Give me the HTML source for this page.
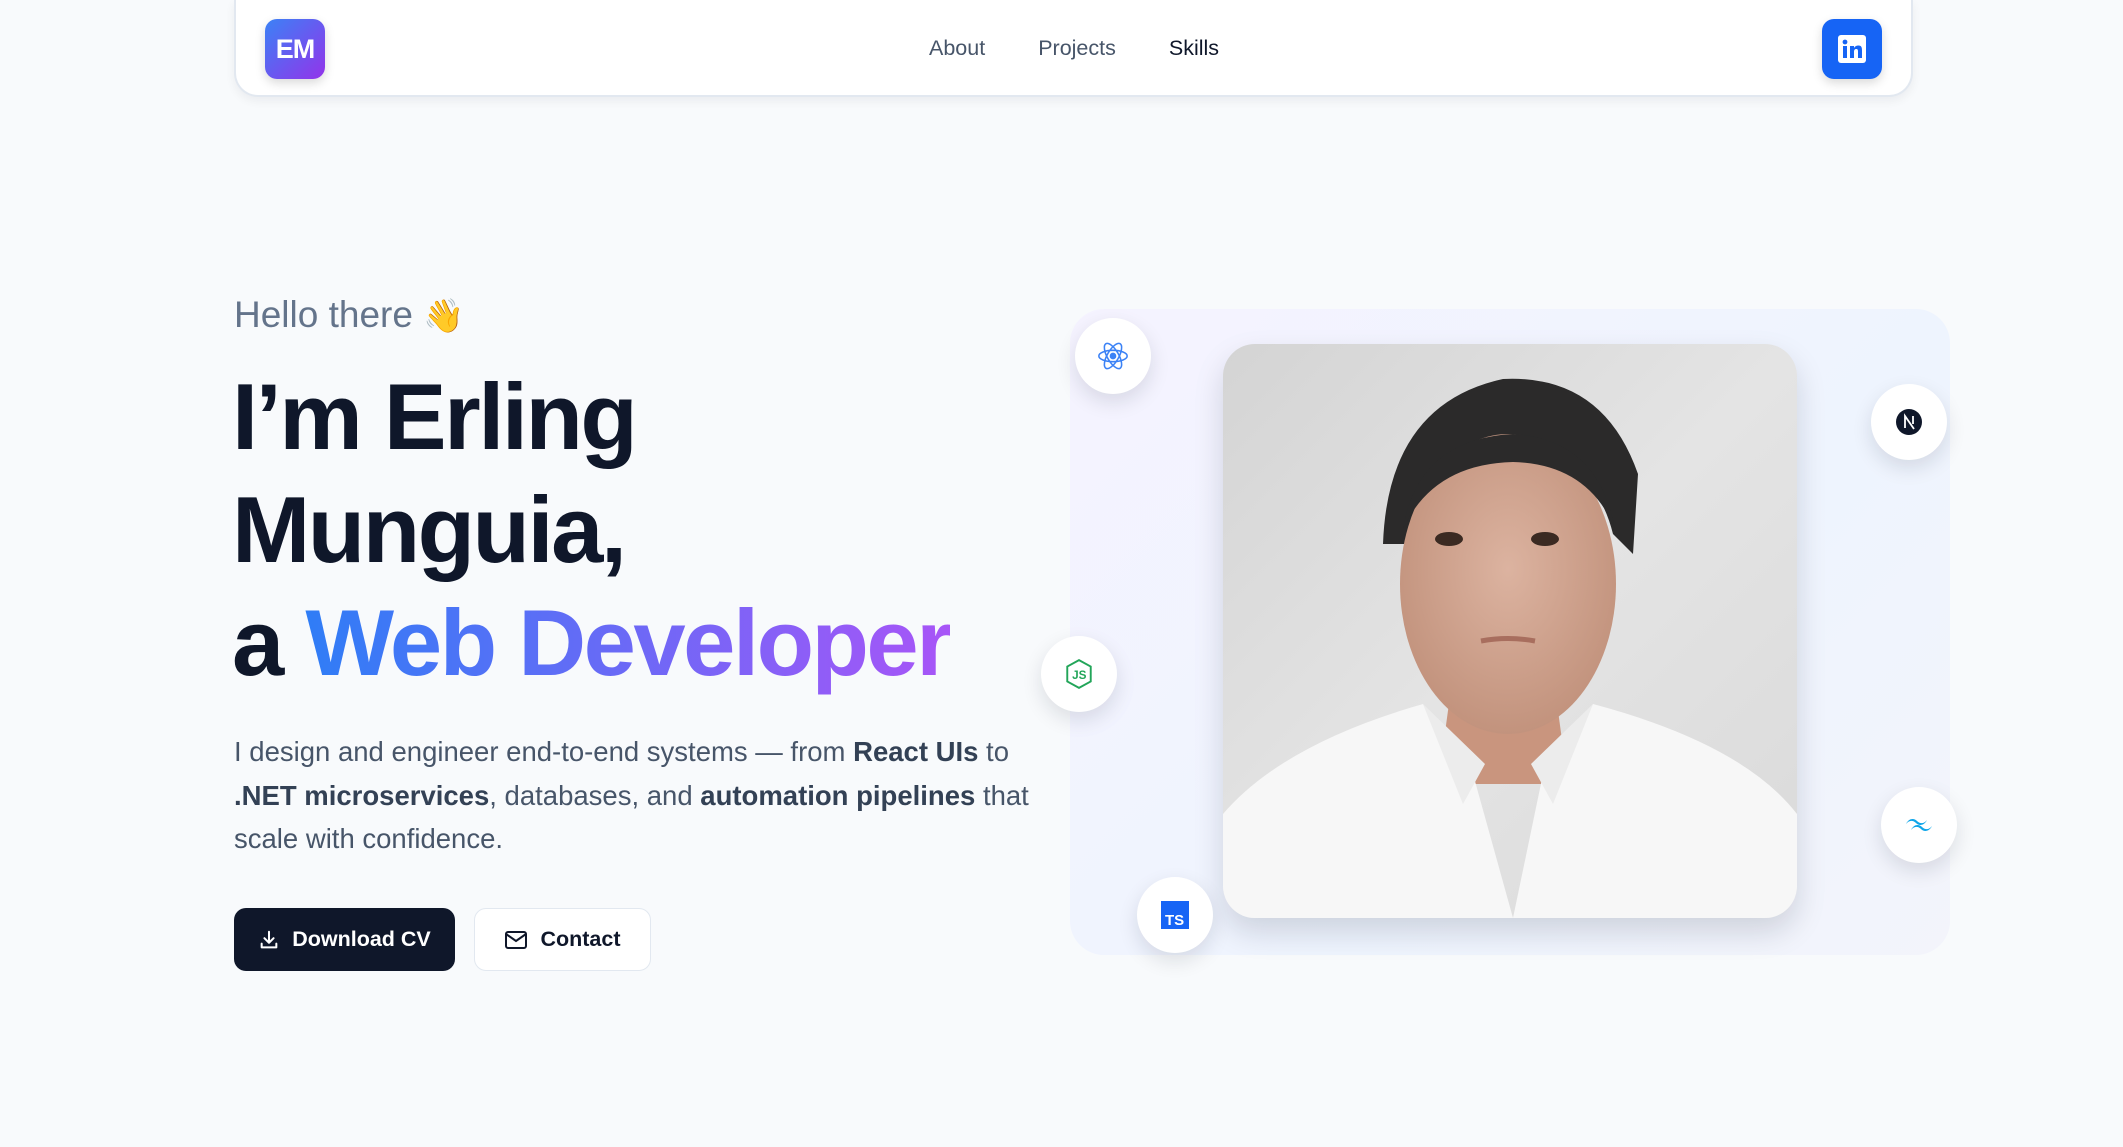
<!DOCTYPE html>
<html><head><meta charset="utf-8"><style>
*{box-sizing:border-box;margin:0;padding:0}
body{width:2123px;height:1147px;background:#f8fafc;font-family:"Liberation Sans",sans-serif;position:relative;overflow:hidden;color:#0f172a}
.nav{position:absolute;left:234px;top:0;width:1679px;height:97px;background:#fff;border:2px solid #e2e8f0;border-top:none;border-radius:0 0 24px 24px;box-shadow:0 4px 10px rgba(15,23,42,.06)}
.logo{position:absolute;left:29px;top:19px;width:60px;height:60px;border-radius:12px;background:linear-gradient(135deg,#3b82f6,#9333ea);color:#fff;font-weight:bold;font-size:27px;display:flex;align-items:center;justify-content:center;letter-spacing:-1px;box-shadow:0 4px 10px rgba(0,0,0,.15)}
.li{position:absolute;right:29px;top:19px;width:60px;height:60px;border-radius:12px;background:#1664f5;display:flex;align-items:center;justify-content:center;box-shadow:0 4px 10px rgba(0,0,0,.15)}
.links{position:absolute;left:693px;top:36px;font-size:21.5px;color:#475569}
.links span{margin-right:53px}
.hello{position:absolute;left:234px;top:294px;font-size:37px;color:#64748b}
h1{position:absolute;left:232px;top:360px;font-size:94px;line-height:113px;font-weight:bold;letter-spacing:-2.5px;color:#0f172a}
.grad{background:linear-gradient(90deg,#2f7df6,#a855f7);-webkit-background-clip:text;background-clip:text;color:transparent}
p{position:absolute;left:234px;top:730px;width:830px;font-size:27.5px;line-height:43.5px;color:#475569}
p b{color:#334155}
.btn{position:absolute;top:908px;height:63px;border-radius:12px;display:flex;align-items:center;justify-content:center;font-weight:bold;font-size:21.5px;gap:12px}
.dl{left:234px;width:221px;background:#0f172a;color:#fff}
.ct{left:474px;width:177px;background:#fff;border:1.5px solid #e2e8f0;color:#0f172a}
.panel{position:absolute;left:1070px;top:309px;width:880px;height:646px;border-radius:34px;background:linear-gradient(135deg,#f5f3ff,#eef4fe 60%,#f3f4fb)}
.photo{position:absolute;left:1223px;top:344px;width:574px;height:574px;border-radius:32px;overflow:hidden;box-shadow:0 14px 30px rgba(15,23,42,.15)}
.bd{position:absolute;width:76px;height:76px;border-radius:50%;background:#fff;box-shadow:0 8px 20px rgba(15,23,42,.12);display:flex;align-items:center;justify-content:center}
</style></head><body>
<div class="nav">
<div class="logo">EM</div>
<div class="links"><span>About</span><span>Projects</span><span style="color:#0f172a">Skills</span></div>
<div class="li"><svg width="30" height="30" viewBox="0 0 30 30"><rect x="1" y="1" width="28" height="28" rx="3" fill="#fff"/><rect x="6" y="12" width="4" height="12" fill="#1664f5"/><circle cx="8" cy="8" r="2.4" fill="#1664f5"/><path d="M13 12h4v2c1-2 3-2.5 4.5-2.5 3 0 3.5 2 3.5 5V24h-4v-6.5c0-1.5-.3-2.5-1.8-2.5S17 16 17 17.5V24h-4z" fill="#1664f5"/></svg></div>
</div>
<div class="hello">Hello there <span style="font-size:33px">👋</span></div>
<h1>I’m Erling<br>Munguia,<br>a <span class="grad">Web Developer</span></h1>
<p>I design and engineer end-to-end systems — from <b>React UIs</b> to <b>.NET microservices</b>, databases, and <b>automation pipelines</b> that scale with confidence.</p>
<div class="btn dl"><svg width="22" height="22" viewBox="0 0 24 24" fill="none" stroke="#fff" stroke-width="2.2" stroke-linecap="round" stroke-linejoin="round"><path d="M12 3v12M7 10l5 5 5-5M4 16v4h16v-4"/></svg>Download CV</div>
<div class="btn ct"><svg width="24" height="22" viewBox="0 0 24 22" fill="none" stroke="#0f172a" stroke-width="2"><rect x="2" y="3" width="20" height="16" rx="2"/><path d="M2 5l10 7 10-7"/></svg>Contact</div>
<div class="panel"></div>
<div class="photo"><svg width="574" height="574" viewBox="0 0 574 574">
<defs><linearGradient id="bg" x1="0" y1="0" x2="1" y2="1"><stop offset="0" stop-color="#d4d4d4"/><stop offset=".5" stop-color="#e4e4e4"/><stop offset="1" stop-color="#dadada"/></linearGradient>
<radialGradient id="sk" cx=".5" cy=".45" r=".6"><stop offset="0" stop-color="#dcb3a0"/><stop offset="1" stop-color="#c0907a"/></radialGradient></defs>
<rect width="574" height="574" fill="url(#bg)"/>
<path d="M230 330 L330 330 L345 440 L215 440Z" fill="#c9957e"/>
<path d="M160 200 Q165 60 280 35 Q380 30 415 130 L410 210 L390 190 Q370 110 290 110 Q205 110 185 200Z" fill="#2b2a2a"/>
<ellipse cx="285" cy="240" rx="108" ry="150" fill="url(#sk)"/>
<path d="M180 185 Q195 95 290 90 Q375 95 392 185 Q365 120 290 118 Q210 120 180 185Z" fill="#2b2a2a"/>
<ellipse cx="226" cy="195" rx="14" ry="7" fill="#3b2a22"/><ellipse cx="322" cy="195" rx="14" ry="7" fill="#3b2a22"/>
<path d="M258 297 Q285 292 312 297" stroke="#a86e5e" stroke-width="5" fill="none"/>
<path d="M0 470 Q60 400 200 360 L250 430 L290 574 L0 574Z M574 470 Q520 400 370 360 L320 430 L290 574 L574 574Z" fill="#f7f7f7"/>
<path d="M200 360 L240 460 L262 420 Z M370 360 L330 460 L308 420Z" fill="#ececec"/>
</svg></div>
<div class="bd" style="left:1075px;top:318px"><svg width="34" height="34" viewBox="-12 -12 24 24" fill="none" stroke="#3b82f6" stroke-width="1.1"><ellipse rx="10" ry="4"/><ellipse rx="10" ry="4" transform="rotate(60)"/><ellipse rx="10" ry="4" transform="rotate(120)"/><circle r="1.8" fill="#3b82f6"/></svg></div>
<div class="bd" style="left:1871px;top:384px"><svg width="26" height="26" viewBox="0 0 26 26"><circle cx="13" cy="13" r="13" fill="#0f172a"/><path d="M9 19V7l9 13M17 7v8" stroke="#fff" stroke-width="1.8" fill="none"/></svg></div>
<div class="bd" style="left:1041px;top:636px"><svg width="30" height="32" viewBox="0 0 28 30" fill="none" stroke="#22a559" stroke-width="1.8"><path d="M14 2l11 6v14l-11 6-11-6V8z"/><text x="7.5" y="19.5" font-size="11" font-family="Liberation Sans" fill="#22a559" stroke="none" font-weight="bold">JS</text></svg></div>
<div class="bd" style="left:1881px;top:787px"><svg width="30" height="20" viewBox="0 0 30 20"><path d="M2 9c3-6 8-6 11-3s7 3 10-1c-3 6-8 6-11 3s-7-3-10 1zM7 15c3-6 8-6 11-3s7 3 10-1c-3 6-8 6-11 3s-7-3-10 1z" fill="#0ea5e9"/></svg></div>
<div class="bd" style="left:1137px;top:877px"><svg width="28" height="28" viewBox="0 0 28 28"><rect width="28" height="28" fill="#1664f5"/><text x="4" y="24" font-size="15" font-weight="bold" font-family="Liberation Sans" fill="#fff">TS</text></svg></div>
</body></html>
